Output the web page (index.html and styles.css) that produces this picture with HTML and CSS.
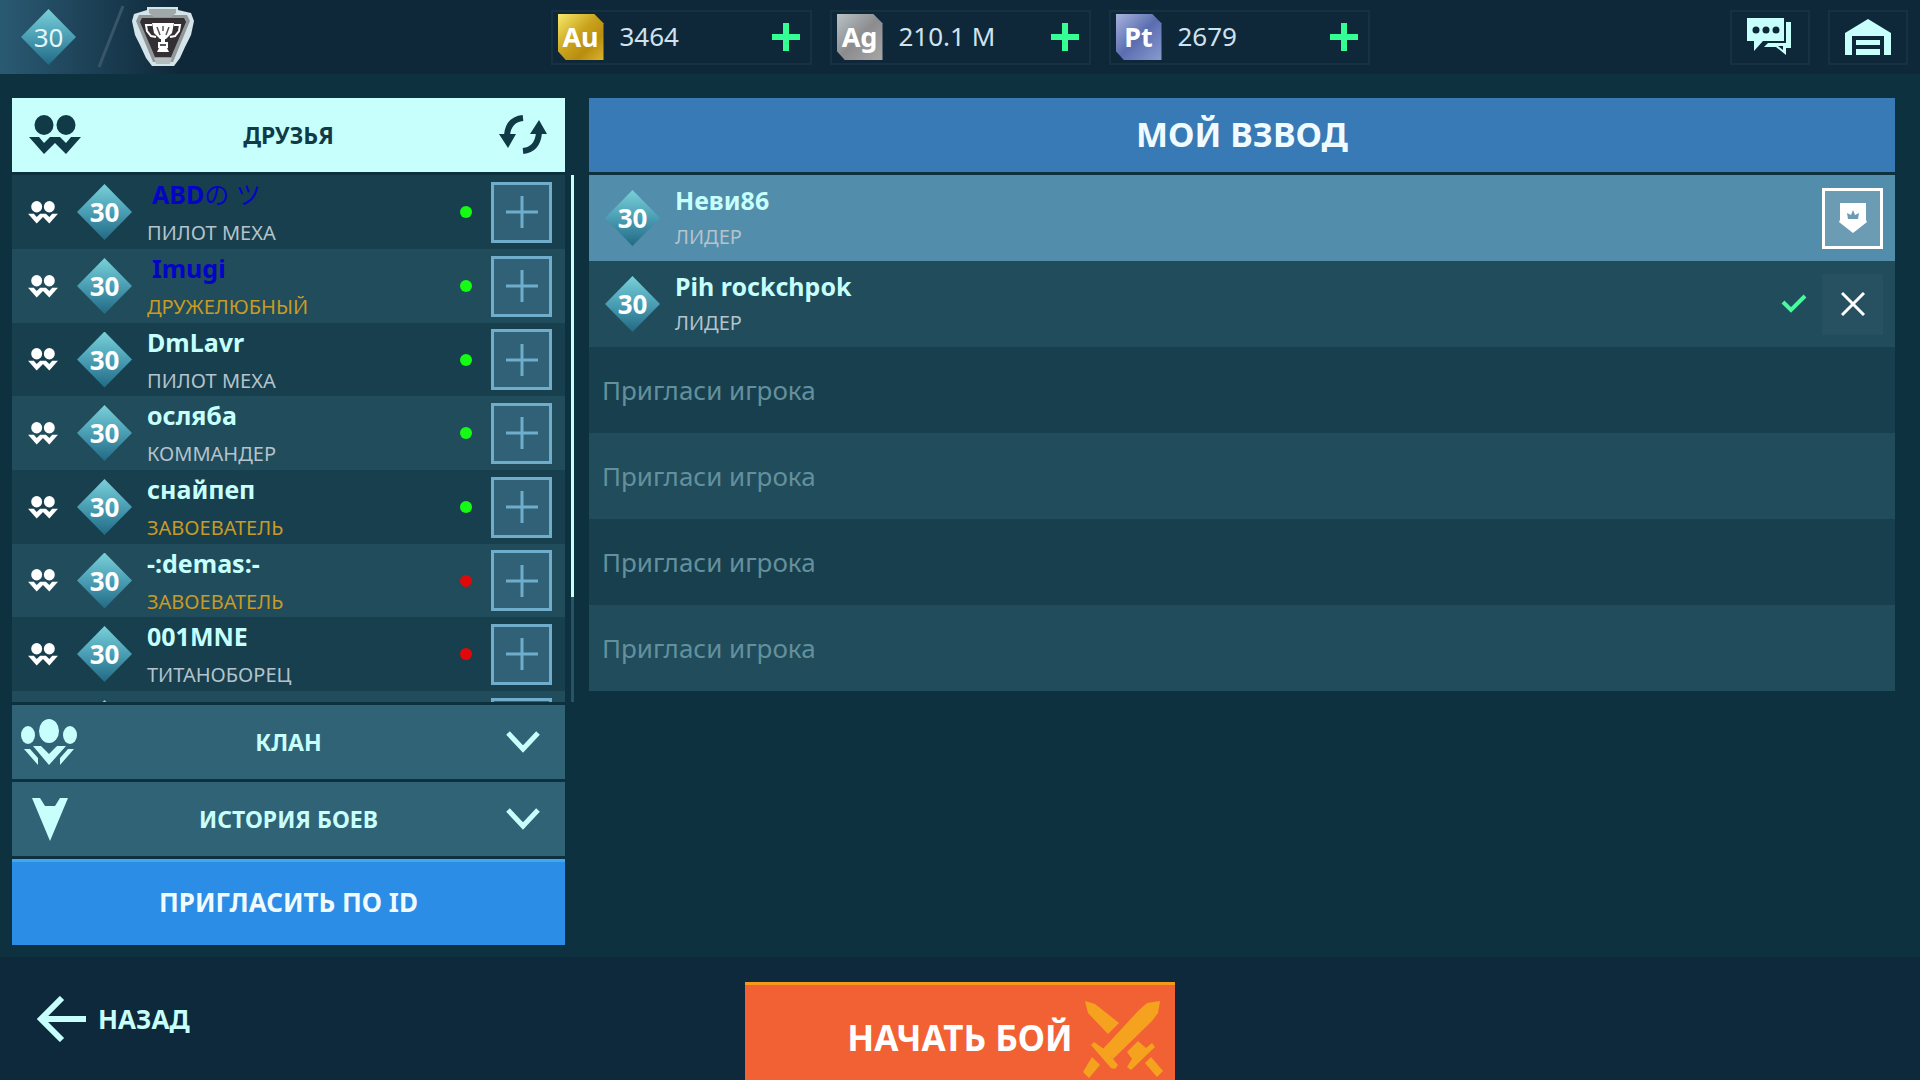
FILE: index.html
```html
<!DOCTYPE html>
<html lang="ru">
<head>
  <meta charset="UTF-8">
  <meta name="viewport" content="width=device-width, initial-scale=1.0">
  <title>Мой взвод</title>
  <link rel="stylesheet" href="styles.css">
</head>
<body>
  <svg class="sprite" aria-hidden="true">
    <symbol id="i-friends" viewBox="0 0 52 40">
      <ellipse cx="15" cy="10" rx="9.5" ry="10"/>
      <ellipse cx="37" cy="10" rx="9.5" ry="10"/>
      <path d="M0 22h10l5 6 6-6h10l6 6 5-6h10L37 39 26 28 15 39z"/>
    </symbol>
    <symbol id="i-chevron" viewBox="0 0 34 22">
      <path d="M2 2l15 16L32 2" fill="none" stroke="currentColor" stroke-width="5"/>
    </symbol>
    <symbol id="i-plus" viewBox="0 0 32 32">
      <path d="M16 0v32M0 16h32" fill="none" stroke="currentColor" stroke-width="3"/>
    </symbol>
    <symbol id="i-add" viewBox="0 0 28 28">
      <path d="M11 0h6v11h11v6H17v11h-6V17H0v-6h11z"/>
    </symbol>
  </svg>

  <header class="topbar">
    <div class="profile">
      <span class="level level-thin"><span>30</span></span>
      <svg class="slash" viewBox="0 0 28 64"><path d="M26 1L2 62" stroke="#38566a" stroke-width="3"/></svg>
      <svg class="league" viewBox="0 0 64 60">
        <path d="M16 0h31v3l13 3 3 8-3 14-6 12-5 11-6 8H21l-6-8-6-13-5-10L1 14l2-7 13-4z" fill="#d5e4e8"/>
        <path d="M8 8h48l3 6-17 41H22L5 14z" fill="#8f9799"/>
        <path d="M11 11h42l2 4-15 35H24L9 15z" fill="#342f33"/>
        <path d="M18 2h27v4l-5 4H23l-5-4z" fill="#a1a8aa"/>
        <path d="M23 51h18l-2 6H25z" fill="#b5bcbe"/>
        <path d="M21 16h22l-2 10-6 6h-6l-6-6z" fill="#fff"/>
        <path d="M21 18h-6l1 6 4 5 5 1M43 18h6l-1 6-4 5-5 1" fill="none" stroke="#fff" stroke-width="2"/>
        <path d="M26 20l3 8M32 19v5M38 20l-3 8" stroke="#55555a" stroke-width="1.5"/>
        <path d="M30 32h4v3h3v6h-1l2 4H26l2-4h-1v-6h3z" fill="#fff"/>
        <path d="M29 38h6" stroke="#55555a" stroke-width="2"/>
      </svg>
    </div>

    <div class="wallet">
      <div class="currency">
        <span class="element gold">Au</span>
        <span class="amount">3464</span>
        <button class="add" type="button" aria-label="Купить золото"><svg><use href="#i-add"/></svg></button>
      </div>
      <div class="currency">
        <span class="element silver">Ag</span>
        <span class="amount">210.1 M</span>
        <button class="add" type="button" aria-label="Купить серебро"><svg><use href="#i-add"/></svg></button>
      </div>
      <div class="currency">
        <span class="element platinum">Pt</span>
        <span class="amount">2679</span>
        <button class="add" type="button" aria-label="Купить платину"><svg><use href="#i-add"/></svg></button>
      </div>
    </div>

    <nav class="shortcuts">
      <button class="shortcut" type="button" aria-label="Чат">
        <svg width="46" height="38" viewBox="0 0 46 38">
          <path d="M39 4h5v26h-5v7l-10-8H17l4-4h18z"/>
          <path d="M0 0h37v23H16L7 33V23H0z" stroke="#0f2839" stroke-width="3" paint-order="stroke"/>
          <circle cx="9" cy="12" r="3.5" fill="#0f2839"/>
          <circle cx="19" cy="12" r="3.5" fill="#0f2839"/>
          <circle cx="29" cy="12" r="3.5" fill="#0f2839"/>
          <path d="M31 28h5v4z" fill="#0f2839"/>
        </svg>
      </button>
      <button class="shortcut" type="button" aria-label="Ангар">
        <svg width="46" height="36" viewBox="0 0 46 36">
          <path d="M23 0l23 14v22h-7V17H7v19H0V14z"/>
          <path d="M11 21h24v5H11zM11 30h24v6H11z"/>
        </svg>
      </button>
    </nav>
  </header>

  <main class="content">
    <section class="sidebar">
      <div class="tab tab-open">
        <svg class="tab-icon friends-icon"><use href="#i-friends"/></svg>
        <h2>ДРУЗЬЯ</h2>
        <button class="refresh" type="button" aria-label="Обновить">
          <svg width="48" height="40" viewBox="0 0 48 40">
            <path d="M24 3C14 4 9 10 8 20M24 36c10-1 15-8 16-18" fill="none" stroke="currentColor" stroke-width="6"/>
            <path d="M0 19h17L9 33zM31 19h17L40 5z"/>
          </svg>
        </button>
      </div>

      <div class="friends-wrap">
        <ul class="friends">
          <li class="friend">
            <svg class="pair"><use href="#i-friends"/></svg>
            <span class="level"><span>30</span></span>
            <div class="who who-marked"><b>ABD<span class="kana">の ツ</span></b><small>ПИЛОТ МЕХА</small></div>
            <i class="dot"></i>
            <button class="invite" type="button" aria-label="Пригласить"><svg><use href="#i-plus"/></svg></button>
          </li>
          <li class="friend">
            <svg class="pair"><use href="#i-friends"/></svg>
            <span class="level"><span>30</span></span>
            <div class="who who-marked"><b>Imugi</b><small class="rare">ДРУЖЕЛЮБНЫЙ</small></div>
            <i class="dot"></i>
            <button class="invite" type="button" aria-label="Пригласить"><svg><use href="#i-plus"/></svg></button>
          </li>
          <li class="friend">
            <svg class="pair"><use href="#i-friends"/></svg>
            <span class="level"><span>30</span></span>
            <div class="who"><b>DmLavr</b><small>ПИЛОТ МЕХА</small></div>
            <i class="dot"></i>
            <button class="invite" type="button" aria-label="Пригласить"><svg><use href="#i-plus"/></svg></button>
          </li>
          <li class="friend">
            <svg class="pair"><use href="#i-friends"/></svg>
            <span class="level"><span>30</span></span>
            <div class="who"><b>осляба</b><small>КОММАНДЕР</small></div>
            <i class="dot"></i>
            <button class="invite" type="button" aria-label="Пригласить"><svg><use href="#i-plus"/></svg></button>
          </li>
          <li class="friend">
            <svg class="pair"><use href="#i-friends"/></svg>
            <span class="level"><span>30</span></span>
            <div class="who"><b>снайпеп</b><small class="rare">ЗАВОЕВАТЕЛЬ</small></div>
            <i class="dot"></i>
            <button class="invite" type="button" aria-label="Пригласить"><svg><use href="#i-plus"/></svg></button>
          </li>
          <li class="friend">
            <svg class="pair"><use href="#i-friends"/></svg>
            <span class="level"><span>30</span></span>
            <div class="who"><b>-:demas:-</b><small class="rare">ЗАВОЕВАТЕЛЬ</small></div>
            <i class="dot offline"></i>
            <button class="invite" type="button" aria-label="Пригласить"><svg><use href="#i-plus"/></svg></button>
          </li>
          <li class="friend">
            <svg class="pair"><use href="#i-friends"/></svg>
            <span class="level"><span>30</span></span>
            <div class="who"><b>001MNE</b><small>ТИТАНОБОРЕЦ</small></div>
            <i class="dot offline"></i>
            <button class="invite" type="button" aria-label="Пригласить"><svg><use href="#i-plus"/></svg></button>
          </li>
          <li class="friend">
            <svg class="pair"><use href="#i-friends"/></svg>
            <span class="level"><span>30</span></span>
            <div class="who"><b>0000000</b></div>
            <i class="dot offline"></i>
            <button class="invite" type="button" aria-label="Пригласить"><svg><use href="#i-plus"/></svg></button>
          </li>
        </ul>
        <div class="scroll"><div class="thumb"></div></div>
      </div>

      <button class="tab" type="button">
        <svg class="tab-icon" viewBox="0 0 56 46">
          <ellipse cx="28" cy="12" rx="10" ry="12"/>
          <ellipse cx="7" cy="16" rx="7" ry="9"/>
          <ellipse cx="49" cy="16" rx="7" ry="9"/>
          <path d="M12 27h8l8 8 8-8h9L28 46zM3 30h6l8 9v7zM53 30h-6l-8 9v7z"/>
        </svg>
        <span class="tab-title">КЛАН</span>
        <svg class="chevron"><use href="#i-chevron"/></svg>
      </button>

      <button class="tab" type="button">
        <svg class="tab-icon" viewBox="0 0 56 46">
          <path d="M11 2h8l5 8h10l5-8h8L29 45z"/>
        </svg>
        <span class="tab-title">ИСТОРИЯ БОЕВ</span>
        <svg class="chevron"><use href="#i-chevron"/></svg>
      </button>

      <button class="invite-id" type="button">ПРИГЛАСИТЬ ПО ID</button>
    </section>

    <section class="squad">
      <h1>МОЙ ВЗВОД</h1>
      <ul class="slots">
        <li class="slot me">
          <span class="level"><span>30</span></span>
          <div class="who"><b>Неви86</b><small>ЛИДЕР</small></div>
          <button class="leader" type="button" aria-label="Лидер взвода">
            <svg width="28" height="30" viewBox="0 0 28 30">
              <path d="M1 0h26v17l1 2-14 11L0 19l1-2z"/>
              <path d="M8 10l4 2 2-5 2 5 4-2-1 6H9z" fill="#6c9cb4"/>
            </svg>
          </button>
        </li>
        <li class="slot">
          <span class="level"><span>30</span></span>
          <div class="who"><b>Pih rockchpok</b><small>ЛИДЕР</small></div>
          <svg class="ready" viewBox="0 0 26 20"><path d="M2 8l8 8L24 2" fill="none" stroke="currentColor" stroke-width="4"/></svg>
          <button class="kick" type="button" aria-label="Исключить">
            <svg width="24" height="24" viewBox="0 0 24 24"><path d="M1 1l22 22M23 1L1 23" stroke="currentColor" stroke-width="3"/></svg>
          </button>
        </li>
        <li class="slot"><button class="empty" type="button">Пригласи игрока</button></li>
        <li class="slot"><button class="empty" type="button">Пригласи игрока</button></li>
        <li class="slot"><button class="empty" type="button">Пригласи игрока</button></li>
        <li class="slot"><button class="empty" type="button">Пригласи игрока</button></li>
      </ul>
    </section>
  </main>

  <footer class="bottombar">
    <a class="back" href="#">
      <svg width="49" height="46" viewBox="0 0 49 46"><path d="M25 2L4 23l21 21M4 23h45" fill="none" stroke="currentColor" stroke-width="6"/></svg>
      НАЗАД
    </a>
    <button class="start" type="button">
      НАЧАТЬ БОЙ
      <svg class="swords" viewBox="0 0 80 78">
        <path d="M2 1l10 3 24 19-11 11L5 13z"/>
        <path d="M55 41l8 7 6-5 3 4-24 23-4-3 5-8-5-7z"/>
        <path d="M62 63l6-6 12 14-6 6z"/>
        <path d="M77 1l-2 12-6 8-39 38-10-10 35-38 9-8z"/>
        <path d="M8 45l3-3 10 7 9 10 5 6-3 4-4-1z"/>
        <path d="M9 57l8 8L6 78l-6-6z"/>
      </svg>
    </button>
  </footer>
</body>
</html>
```
FILE: styles.css
```css
* {
  box-sizing: border-box;
}
body {
  margin: 0;
  height: 100vh;
  display: flex;
  flex-direction: column;
  overflow: hidden;
  background: #0e3140;
  color: #c6fffc;
  font-family: "Noto Sans", "Noto Sans CJK JP", sans-serif;
}
button {
  font-family: inherit;
  color: inherit;
  background: none;
  border: none;
  padding: 0;
  cursor: pointer;
}
ul {
  list-style: none;
  margin: 0;
  padding: 0;
}
h1, h2 {
  margin: 0;
}
svg {
  fill: currentColor;
  flex-shrink: 0;
}
.sprite {
  position: absolute;
  width: 0;
  height: 0;
}

/* level diamond */
.level {
  width: 55px;
  height: 56px;
  flex-shrink: 0;
  display: flex;
  align-items: center;
  justify-content: center;
  clip-path: polygon(50% 0, 100% 50%, 50% 100%, 0 50%);
  background: linear-gradient(#7ad0d8, #4a9eb4 50%, #226a84);
  color: #fff;
  font-size: 26px;
  font-weight: bold;
}
.level-thin {
  font-weight: normal;
  color: #e4f6fb;
}

/* top bar */
.topbar {
  height: 74px;
  flex-shrink: 0;
  display: grid;
  grid-template-columns: 1fr auto 1fr;
  padding-right: 12px;
  background: linear-gradient(90deg, #2a5a73, #0f2839 180px);
}
.profile {
  display: flex;
  align-items: center;
  padding-left: 21px;
}
.slash {
  width: 28px;
  height: 64px;
  margin-left: 21px;
}
.league {
  width: 64px;
  height: 60px;
  margin-left: 6px;
}
.wallet {
  display: flex;
  align-items: center;
  gap: 18px;
  padding-left: 12px;
}
.currency {
  width: 261px;
  height: 55px;
  display: flex;
  align-items: center;
  padding: 0 10px 0 5px;
  border: 2px solid #16313f;
}
.element {
  width: 46px;
  height: 46px;
  display: flex;
  align-items: center;
  justify-content: center;
  clip-path: polygon(0 0, 80% 0, 100% 20%, 100% 100%, 18% 100%, 0 80%);
  color: #fff;
  font-size: 27px;
  font-weight: bold;
  line-height: 40px;
}
.gold {
  background: linear-gradient(135deg, #f6ea6a, #c9a21c 45%, #b98d10 70%, #d9b52c);
}
.silver {
  background: linear-gradient(135deg, #b9c2c6, #8c8c8e 50%, #a7a7a8);
}
.platinum {
  background: linear-gradient(135deg, #a9b4dc, #5a6db0 50%, #8b9bd0);
}
.amount {
  flex: 1;
  margin-left: 16px;
  padding-bottom: 2px;
  color: #cfe2f0;
  font-size: 26px;
}
.add {
  width: 28px;
  height: 28px;
  color: #35ff94;
}
.add svg {
  display: block;
  width: 28px;
  height: 28px;
}
.shortcuts {
  display: flex;
  align-items: center;
  justify-content: flex-end;
  gap: 18px;
}
.shortcut {
  width: 80px;
  height: 55px;
  display: flex;
  align-items: center;
  justify-content: center;
  border: 2px solid #16313f;
}

/* content */
.content {
  flex: 1;
  min-height: 0;
  display: flex;
  gap: 15px;
  padding: 24px 25px 12px 12px;
}
.sidebar {
  width: 562px;
  flex-shrink: 0;
  display: flex;
  flex-direction: column;
  gap: 3px;
}
.tab {
  height: 74px;
  flex-shrink: 0;
  display: grid;
  grid-template-columns: 66px 1fr 66px;
  align-items: center;
  margin-right: 9px;
  padding: 0 9px;
  background: #306376;
  color: #c6fffc;
  text-align: center;
}
.tab-open {
  background: #c6fffc;
  color: #103a46;
}
.tab h2, .tab-title {
  font-size: 23px;
  font-weight: bold;
  line-height: 30px;
}
.tab-icon {
  width: 56px;
  height: 46px;
}
.friends-icon {
  width: 52px;
  height: 40px;
  margin-left: 8px;
}
.refresh {
  justify-self: end;
  margin-right: 9px;
}
.refresh svg {
  display: block;
}
.chevron {
  width: 34px;
  height: 22px;
  justify-self: center;
}
.friends-wrap {
  flex: 1;
  min-height: 0;
  display: flex;
  justify-content: space-between;
}
.friends {
  width: 553px;
  overflow: hidden;
}
.friend {
  height: 74px;
  display: flex;
  align-items: center;
  padding: 0 13px 0 16px;
  background: #183f4d;
}
.friend:nth-child(even) {
  background: #204c5b;
}
.friend:nth-child(3n) {
  height: 73px;
}
.pair {
  width: 30px;
  height: 23px;
  margin-right: 19px;
  color: #fff;
}
.who {
  flex: 1;
  margin-left: 15px;
  display: flex;
  flex-direction: column;
  align-self: flex-start;
}
.who b {
  font-size: 25px;
  line-height: 38px;
}
.who small {
  color: #b4c3cc;
  font-size: 20px;
  line-height: 40px;
}
.who .rare {
  color: #c79b25;
}
.who-marked b {
  padding-left: 5px;
  color: #0404c6;
}
.kana {
  font-weight: normal;
}
.dot {
  width: 12px;
  height: 12px;
  margin-right: 19px;
  border-radius: 50%;
  background: #14fb14;
}
.offline {
  background: #e00808;
}
.invite {
  width: 61px;
  height: 61px;
  flex-shrink: 0;
  display: flex;
  align-items: center;
  justify-content: center;
  background: #306176;
  border: 3px solid #6fadcb;
  color: #6fadcb;
}
.invite svg {
  width: 32px;
  height: 32px;
}
.scroll {
  width: 3px;
  background: #265464;
}
.thumb {
  height: 80%;
  background: #c6fffc;
}
.invite-id {
  height: 86px;
  flex-shrink: 0;
  margin-right: 9px;
  padding-bottom: 4px;
  border-top: 3px solid #3fa9ec;
  background: #2b8de6;
  color: #f0fbff;
  font-size: 26px;
  font-weight: bold;
}

/* squad */
.squad {
  flex: 1;
}
.squad h1 {
  height: 74px;
  margin-bottom: 3px;
  background: #377ab6;
  color: #f0fbff;
  font-size: 34px;
  line-height: 72px;
  text-align: center;
}
.slot {
  height: 86px;
  display: flex;
  align-items: center;
  padding: 0 12px 0 13px;
  background: #183f4d;
}
.slot:nth-child(even) {
  background: #204c5b;
}
.slot.me {
  background: #528dab;
}
.slot .level {
  margin-left: 3px;
}
.slot .who {
  padding-top: 6px;
}
.slot .who small {
  line-height: 36px;
}
.leader, .kick {
  width: 61px;
  height: 61px;
  display: flex;
  align-items: center;
  justify-content: center;
  color: #fff;
}
.leader {
  background: #6c9cb4;
  border: 3px solid #fff;
}
.kick {
  background: #275160;
}
.ready {
  width: 26px;
  height: 20px;
  margin-right: 15px;
  color: #48fa9f;
}
.empty {
  flex: 1;
  align-self: stretch;
  color: #64909d;
  font-size: 26px;
  text-align: left;
}

/* bottom bar */
.bottombar {
  height: 123px;
  flex-shrink: 0;
  display: grid;
  grid-template-columns: 1fr 430px 1fr;
  align-items: end;
  background: #0e293b;
}
.back {
  display: flex;
  align-items: center;
  align-self: center;
  gap: 12px;
  padding-left: 37px;
  color: inherit;
  font-size: 26px;
  font-weight: bold;
  text-decoration: none;
}
.start {
  position: relative;
  height: 98px;
  padding-top: 10px;
  border-top: 3px solid #f39a1d;
  background: #f26133;
  color: #fff;
  font-size: 35px;
  font-weight: bold;
}
.swords {
  position: absolute;
  top: 15px;
  right: 12px;
  width: 80px;
  height: 78px;
  color: #f5a31f;
}
```
